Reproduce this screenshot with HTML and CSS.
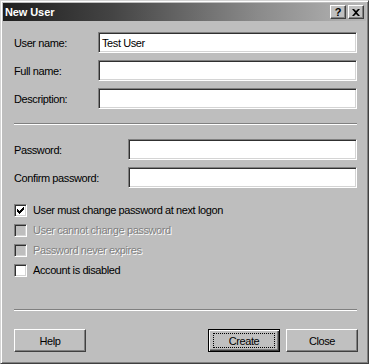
FILE: index.html
```html
<!DOCTYPE html>
<html>
<head>
<meta charset="utf-8">
<link rel="stylesheet" href="styles.css">
</head>
<body>
<div class="window">
  <div class="titlebar">
    <span class="title">New User</span>
    <div class="tbtns">
      <span class="tbtn q">?</span>
      <span class="tbtn x"><svg width="8" height="7" viewBox="0 0 8 7"><path d="M0 0h2l2 2 2-2h2L5 3.5 8 7H6L4 5 2 7H0l3-3.5z" fill="#000"/></svg></span>
    </div>
  </div>
  <div class="content">
    <div class="fields">
      <div class="row"><label>User name:</label><div class="input">Test User</div></div>
      <div class="row"><label>Full name:</label><div class="input"></div></div>
      <div class="row"><label>Description:</label><div class="input"></div></div>
    </div>
    <div class="sep sep1"></div>
    <div class="fields pw">
      <div class="row"><label>Password:</label><div class="input"></div></div>
      <div class="row"><label>Confirm password:</label><div class="input"></div></div>
    </div>
    <div class="checks">
      <div class="check"><span class="box"><svg width="7" height="7" viewBox="0 0 7 7"><path d="M0 2h1v1h1v1h1V3h1V2h1V1h1V0h1v3H6v1H5v1H4v1H3v1H2V6H1V5H0z" fill="#000"/></svg></span><span>User must change password at next logon</span></div>
      <div class="check disabled"><span class="box"></span><span>User cannot change password</span></div>
      <div class="check disabled"><span class="box"></span><span>Password never expires</span></div>
      <div class="check"><span class="box"></span><span>Account is disabled</span></div>
    </div>
    <div class="sep sep2"></div>
    <div class="buttons">
      <div class="btn">Help</div>
      <div class="spacer"></div>
      <div class="btn default"><span class="focus">Create</span></div>
      <div class="btn">Close</div>
    </div>
  </div>
</div>
</body>
</html>
```

FILE: styles.css
```css
html, body {
  margin: 0;
  padding: 0;
  background: #bfbfbf;
}
body {
  font-family: "Liberation Sans", Arial, sans-serif;
  font-size: 11px;
  letter-spacing: -0.4px;
  color: #000;
}
.window {
  width: 369px;
  height: 364px;
  box-sizing: border-box;
  background: #bebebe;
  border: 1px solid;
  border-color: #d4d4d4 #404040 #404040 #d4d4d4;
  box-shadow: inset 1px 1px #fff, inset -1px -1px #808080;
  padding: 2px;
  display: flex;
  flex-direction: column;
}
.titlebar {
  height: 18px;
  background: linear-gradient(to right, #1e1e1e 0%, #444 30%, #8a8a8a 70%, #b6b6b6 100%);
  display: flex;
  align-items: center;
  justify-content: space-between;
  padding: 0 2px 0 2px;
}
.title {
  color: #fff;
  font-weight: bold;
  font-size: 11px;
  letter-spacing: -0.1px;
}
.tbtns {
  display: flex;
  gap: 2px;
}
.tbtn {
  width: 16px;
  height: 14px;
  box-sizing: border-box;
  background: #c0c0c0;
  border: 1px solid;
  border-color: #fff #404040 #404040 #fff;
  box-shadow: inset -1px -1px #808080;
  display: flex;
  align-items: center;
  justify-content: center;
  font-weight: bold;
  font-size: 11px;
  letter-spacing: 0;
  line-height: 1;
}
.content {
  padding: 11px 9px 0 11px;
  display: flex;
  flex-direction: column;
}
.fields {
  display: flex;
  flex-direction: column;
  gap: 7px;
}
.row {
  display: flex;
  align-items: center;
  height: 21px;
}
.row label {
  width: 84px;
  flex: none;
}
.pw .row label {
  width: 114px;
}
.input {
  flex: 1;
  height: 21px;
  box-sizing: border-box;
  background: #fff;
  border: 1px solid;
  border-color: #808080 #fff #fff #808080;
  box-shadow: inset 1px 1px #303030, inset -1px -1px #d4d4d4;
  padding: 3px 0 0 3px;
  line-height: 14px;
}
.sep {
  height: 0;
  border-top: 1px solid #808080;
  border-bottom: 1px solid #fff;
}
.sep1 {
  margin-top: 14px;
}
.pw {
  margin-top: 14px;
}
.checks {
  margin-top: 13px;
  display: flex;
  flex-direction: column;
}
.check {
  height: 20px;
  display: flex;
  align-items: flex-start;
  gap: 6px;
}
.check span:last-child {
  line-height: 13px;
  margin-top: 3px;
}
.box {
  margin-top: 3px;
  width: 13px;
  height: 13px;
  box-sizing: border-box;
  background: #fff;
  border: 1px solid;
  border-color: #808080 #fff #fff #808080;
  box-shadow: inset 1px 1px #303030, inset -1px -1px #d4d4d4;
  display: flex;
  align-items: center;
  justify-content: center;
}
.disabled .box {
  background: #bebebe;
}
.disabled span:last-child {
  color: #808080;
  text-shadow: 1px 1px #fff;
}
.sep2 {
  margin-top: 28px;
}
.buttons {
  margin-top: 18px;
  display: flex;
  gap: 6px;
  margin-right: -1px;
}
.spacer {
  flex: 1;
}
.btn {
  width: 72px;
  height: 23px;
  box-sizing: border-box;
  background: #c0c0c0;
  border: 1px solid;
  border-color: #fff #404040 #404040 #fff;
  box-shadow: inset -1px -1px #808080;
  display: flex;
  align-items: center;
  justify-content: center;
}
.btn.default {
  border: 1px solid #000;
  box-shadow: inset 1px 1px #fff, inset -1px -1px #404040, inset -2px -2px #808080;
}
.focus {
  box-sizing: border-box;
  width: 62px;
  height: 15px;
  border: 1px dotted #000;
  display: flex;
  align-items: center;
  justify-content: center;
}
```
